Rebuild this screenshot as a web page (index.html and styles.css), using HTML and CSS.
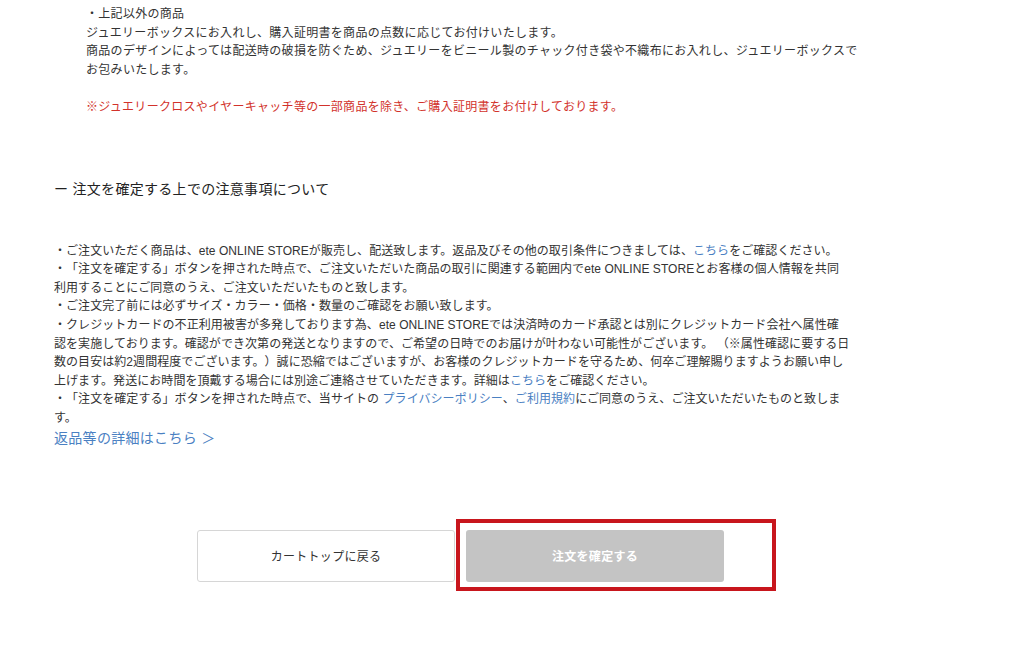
FILE: index.html
```html
<!DOCTYPE html>
<html lang="ja">
<head>
<meta charset="utf-8">
<title>注文確認</title>
<link rel="stylesheet" href="styles.css">
</head>
<body>
<main class="page">
  <section class="package">
    <p class="package-text">・上記以外の商品<br>ジュエリーボックスにお入れし、購入証明書を商品の点数に応じてお付けいたします。<br>商品のデザインによっては配送時の破損を防ぐため、ジュエリーをビニール製のチャック付き袋や不織布にお入れし、ジュエリーボックスで<br>お包みいたします。</p>
    <p class="package-note">※ジュエリークロスやイヤーキャッチ等の一部商品を除き、ご購入証明書をお付けしております。</p>
  </section>

  <section class="notice">
    <h2 class="notice-title">ー 注文を確定する上での注意事項について</h2>
    <p class="notice-text">・ご注文いただく商品は、ete ONLINE STOREが販売し、配送致します。返品及びその他の取引条件につきましては、<a class="link" href="#">こちら</a>をご確認ください。<br>・「注文を確定する」ボタンを押された時点で、ご注文いただいた商品の取引に関連する範囲内でete ONLINE STOREとお客様の個人情報を共同<br>利用することにご同意のうえ、ご注文いただいたものと致します。<br>・ご注文完了前には必ずサイズ・カラー・価格・数量のご確認をお願い致します。<br>・クレジットカードの不正利用被害が多発しております為、ete ONLINE STOREでは決済時のカード承認とは別にクレジットカード会社へ属性確<br>認を実施しております。確認ができ次第の発送となりますので、ご希望の日時でのお届けが叶わない可能性がございます。 （※属性確認に要する日<br>数の目安は約2週間程度でございます。）誠に恐縮ではございますが、お客様のクレジットカードを守るため、何卒ご理解賜りますようお願い申し<br>上げます。発送にお時間を頂戴する場合には別途ご連絡させていただきます。詳細は<a class="link" href="#">こちら</a>をご確認ください。<br>・「注文を確定する」ボタンを押された時点で、当サイトの <a class="link" href="#">プライバシーポリシー</a>、<a class="link" href="#">ご利用規約</a>にご同意のうえ、ご注文いただいたものと致しま<br>す。</p>
    <a class="more-link" href="#">返品等の詳細はこちら ＞</a>
  </section>

  <div class="actions">
    <button class="btn btn-back" type="button">カートトップに戻る</button>
    <div class="confirm-wrap">
      <button class="btn btn-confirm" type="button" disabled>注文を確定する</button>
      <span class="highlight" aria-hidden="true"></span>
    </div>
  </div>
</main>
</body>
</html>
```

FILE: styles.css
```css
* {
  box-sizing: border-box;
}

html, body {
  margin: 0;
  padding: 0;
  background: #ffffff;
}

body {
  font-family: "Liberation Sans", "Noto Sans CJK JP", sans-serif;
  font-size: 12px;
  color: #333333;
  letter-spacing: 0.025em;
  text-spacing-trim: space-all;
}

.page {
  width: 813px;
  margin-left: 54px;
  padding-top: 5px;
  padding-bottom: 80px;
}

p {
  margin: 0;
}

.package {
  padding-left: 32px;
}

.package-text {
  line-height: 18.6px;
  white-space: nowrap;
}

.package-note {
  margin-top: 18.6px;
  line-height: 18.6px;
  color: #d2322b;
}

.notice {
  margin-top: 62px;
}

.notice-title {
  margin: 0;
  font-size: 14px;
  font-weight: normal;
  line-height: 20px;
  color: #222222;
}

.notice-text {
  margin-top: 43px;
  line-height: 18.6px;
  letter-spacing: 0.005em;
  white-space: nowrap;
}

.link {
  color: #4a80c2;
  text-decoration: none;
}

.more-link {
  display: block;
  font-size: 14px;
  line-height: 20px;
  color: #4a80c2;
  text-decoration: none;
}

.actions {
  margin-top: 82px;
  display: flex;
  justify-content: center;
  gap: 11px;
}

.btn {
  width: 258px;
  height: 52px;
  border-radius: 3px;
  font-family: inherit;
  font-size: 12px;
  letter-spacing: 0.025em;
  cursor: pointer;
}

.btn-back {
  background: #ffffff;
  border: 1px solid #d6d6d6;
  color: #333333;
  font-weight: normal;
}

.confirm-wrap {
  position: relative;
}

.btn-confirm {
  background: #c4c4c4;
  border: none;
  color: #ffffff;
  font-weight: bold;
}

.highlight {
  position: absolute;
  left: -10px;
  top: -11px;
  width: 320px;
  height: 72px;
  border: 4px solid #c8161d;
  pointer-events: none;
}
```
